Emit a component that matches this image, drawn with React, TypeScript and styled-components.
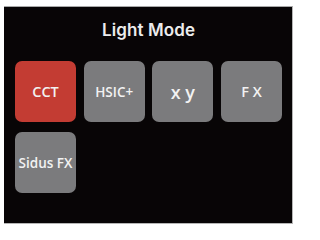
import styled, { createGlobalStyle } from "styled-components";

const GlobalStyle = createGlobalStyle`
  html, body {
    margin: 0;
    padding: 0;
    background: #ffffff;
  }
  * {
    box-sizing: border-box;
  }
`;

const Screen = styled.div`
  width: 289px;
  height: 218px;
  margin: 6px 0 0 4px;
  background: #080506;
  border-top: 1px solid #a9a9a9;
  border-right: 1px solid #b5b5b5;
  border-bottom: 1px solid #b5b5b5;
  padding: 13px 0 0 11px;
  display: flex;
  flex-direction: column;
`;

const Title = styled.div`
  width: 267px;
  height: 20px;
  line-height: 20px;
  text-align: center;
  font-family: Inter, "Noto Sans", sans-serif;
  font-size: 17px;
  font-weight: 600;
  color: #ececec;
  letter-spacing: 0.1px;
`;

const ModeGrid = styled.div`
  margin-top: 21px;
  display: grid;
  grid-template-columns: repeat(4, 61px);
  grid-auto-rows: 61px;
  column-gap: 7.7px;
  row-gap: 10px;
`;

const ModeButton = styled.button<{ $active?: boolean; $size?: number }>`
  border: none;
  padding: 0;
  border-radius: 7px;
  background: ${(p) => (p.$active ? "#c33c33" : "#7b7b7d")};
  color: #f2f2f2;
  font-family: "Open Sans", "Noto Sans", sans-serif;
  font-size: ${(p) => p.$size ?? 13}px;
  font-weight: 600;
  display: flex;
  align-items: center;
  justify-content: center;
  white-space: nowrap;
`;

const modes = [
  { label: "CCT", size: 14.5 },
  { label: "HSIC+", size: 13.5 },
  { label: "x y", size: 18 },
  { label: "F X", size: 14.5 },
  { label: "Sidus FX", size: 13.5 },
];

const App = () => {
  return (
    <>
      <GlobalStyle />
      <Screen>
        <Title>Light Mode</Title>
        <ModeGrid>
          {modes.map((m, i) => (
            <ModeButton key={m.label} $active={i === 0} $size={m.size}>
              {m.label}
            </ModeButton>
          ))}
        </ModeGrid>
      </Screen>
    </>
  );
};

export default App;
